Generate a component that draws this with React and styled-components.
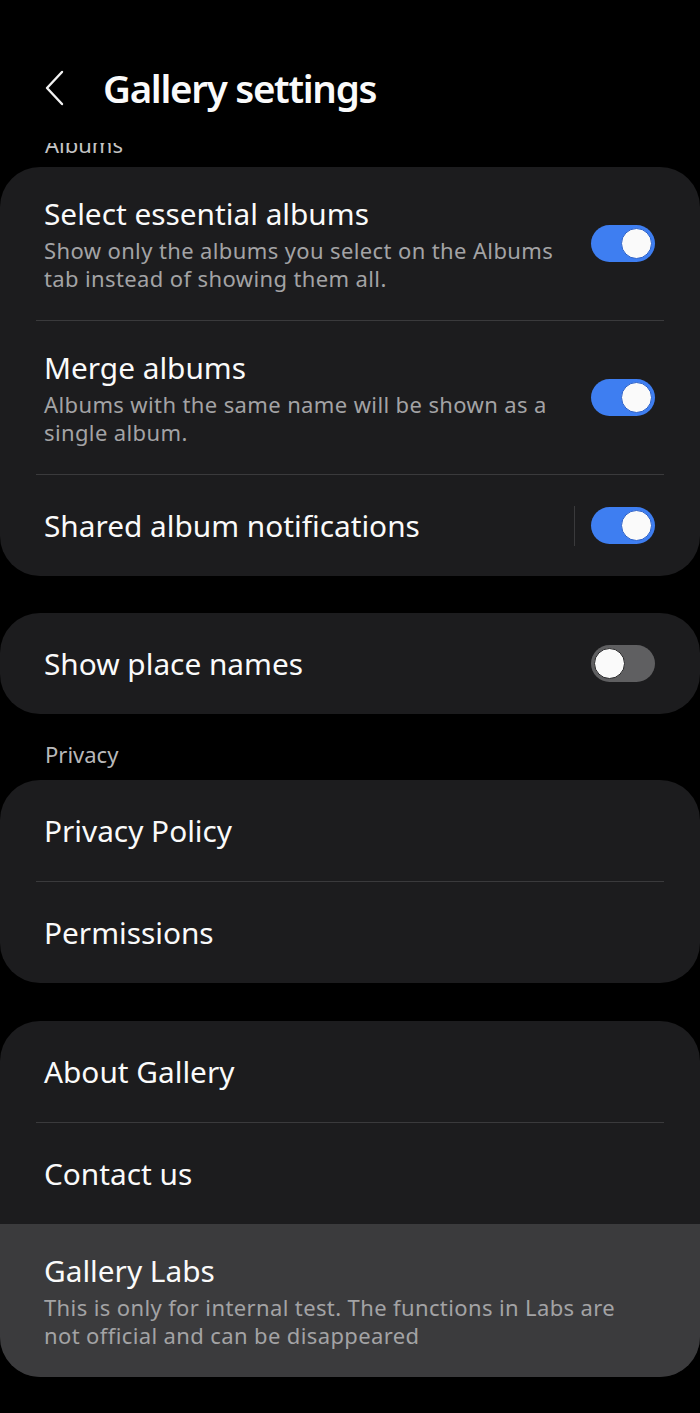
import styled, { createGlobalStyle } from 'styled-components';

const GlobalStyle = createGlobalStyle`
  html, body {
    margin: 0;
    padding: 0;
    background: #000;
  }
  body {
    font-family: "Noto Sans", Roboto, sans-serif;
    color: #fafafa;
  }
`;

export default function App() {
  return (
    <Page>
      <GlobalStyle />
      <Header>
        <BackButton aria-label="Back">
          <svg width="22" height="36" viewBox="0 0 22 36" fill="none">
            <path d="M18 2 L3 18 L18 34" stroke="#f2f2f2" strokeWidth="2.4" strokeLinecap="round" strokeLinejoin="round" />
          </svg>
        </BackButton>
        <Title>Gallery settings</Title>
      </Header>

      <ClippedLabel>
        <span>Albums</span>
      </ClippedLabel>

      <Card>
        <Row $tall>
          <RowText>
            <RowTitle>Select essential albums</RowTitle>
            <RowSub>Show only the albums you select on the Albums tab instead of showing them all.</RowSub>
          </RowText>
          <Toggle $on />
        </Row>
        <Divider />
        <Row $tall>
          <RowText>
            <RowTitle>Merge albums</RowTitle>
            <RowSub>Albums with the same name will be shown as a single album.</RowSub>
          </RowText>
          <Toggle $on />
        </Row>
        <Divider />
        <Row>
          <RowText>
            <RowTitle>Shared album notifications</RowTitle>
          </RowText>
          <VSep />
          <Toggle $on />
        </Row>
      </Card>

      <Card $gap="37px">
        <Row>
          <RowText>
            <RowTitle>Show place names</RowTitle>
          </RowText>
          <Toggle />
        </Row>
      </Card>

      <SectionLabel>Privacy</SectionLabel>

      <Card>
        <Row>
          <RowText>
            <RowTitle>Privacy Policy</RowTitle>
          </RowText>
        </Row>
        <Divider />
        <Row>
          <RowText>
            <RowTitle>Permissions</RowTitle>
          </RowText>
        </Row>
      </Card>

      <Card $gap="38px">
        <Row>
          <RowText>
            <RowTitle>About Gallery</RowTitle>
          </RowText>
        </Row>
        <Divider />
        <Row>
          <RowText>
            <RowTitle>Contact us</RowTitle>
          </RowText>
        </Row>
        <Row $tall $pressed>
          <RowText>
            <RowTitle>Gallery Labs</RowTitle>
            <RowSub>This is only for internal test. The functions in Labs are not official and can be disappeared</RowSub>
          </RowText>
        </Row>
      </Card>
    </Page>
  );
}

function Toggle({ $on }) {
  return (
    <Track $on={$on}>
      <Knob $on={$on} />
    </Track>
  );
}

const Page = styled.div`
  width: 700px;
  height: 1413px;
  background: #000;
  overflow: hidden;
`;

const Header = styled.header`
  display: flex;
  align-items: center;
  height: 135px;
  padding: 41px 0 0 44px;
  box-sizing: border-box;
`;

const BackButton = styled.div`
  display: flex;
  align-items: center;
  width: 59px;
  height: 36px;
`;

const Title = styled.h1`
  margin: 0;
  font-size: 38.5px;
  line-height: 44px;
  font-weight: 600;
  letter-spacing: -1.3px;
  color: #fafafa;
`;

const ClippedLabel = styled.div`
  height: 11px;
  margin-top: 8px;
  margin-bottom: 13px;
  padding-left: 45px;
  overflow: hidden;
  span {
    display: block;
    font-size: 22px;
    line-height: 30px;
    color: #c4c4c4;
    margin-top: -14px;
  }
`;

const Card = styled.section`
  background: #1c1c1e;
  border-radius: 40px;
  margin-top: ${(p) => p.$gap || '0'};
  overflow: hidden;
`;

const Row = styled.div`
  display: flex;
  align-items: center;
  min-height: ${(p) => (p.$tall ? '153px' : '101px')};
  padding: 0 45px 0 44px;
  box-sizing: border-box;
  background: ${(p) => (p.$pressed ? '#3b3b3d' : 'transparent')};
`;

const RowText = styled.div`
  flex: 1;
  min-width: 0;
  padding-right: 30px;
`;

const RowTitle = styled.div`
  font-size: 29.8px;
  line-height: 36px;
  color: #fafafa;
`;

const RowSub = styled.div`
  margin-top: 4px;
  font-size: 22px;
  line-height: 28px;
  color: #a3a3a5;
  letter-spacing: 0.38px;
`;

const Divider = styled.div`
  height: 1px;
  margin: 0 36px;
  background: #3a3a3c;
`;

const VSep = styled.div`
  width: 1px;
  height: 40px;
  background: #3a3a3c;
  margin-right: 16px;
`;

const Track = styled.div`
  position: relative;
  flex: none;
  width: 64px;
  height: 37px;
  border-radius: 19px;
  background: ${(p) => (p.$on ? '#3e7ef1' : '#5f5f61')};
`;

const Knob = styled.div`
  position: absolute;
  top: 3px;
  left: ${(p) => (p.$on ? '30px' : '3px')};
  width: 31px;
  height: 31px;
  box-sizing: border-box;
  border-radius: 50%;
  background: #fafafa;
  border: 1.5px solid ${(p) => (p.$on ? '#2f63c9' : '#2a2a2c')};
`;

const SectionLabel = styled.div`
  padding: 26px 45px 12px;
  font-size: 22px;
  line-height: 28px;
  color: #b8b8ba;
`;
